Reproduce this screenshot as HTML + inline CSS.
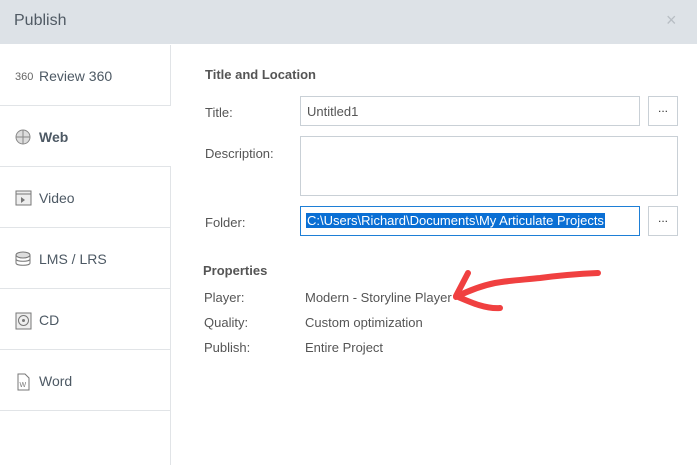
<!DOCTYPE html>
<html><head><style>
body{margin:0;width:697px;height:465px;background:#fff;font-family:"Liberation Sans",sans-serif;color:#4a4f55;position:relative;overflow:hidden;font-size:13px}
.hdr{position:absolute;left:0;top:0;width:697px;height:44px;background:#dde2e7}
.hdr .t{position:absolute;left:14px;top:12px;font-size:16px;color:#505a64}
.hdr .x{position:absolute;left:666px;top:10px;font-size:18px;color:#b8bec4}
.side{position:absolute;left:0;top:45px;width:170px;height:420px;border-right:1px solid #e1e4e7}
.it{position:absolute;left:0;width:170px;height:60px;border-bottom:1px solid #e1e4e7}
.it span{position:absolute;left:39px;top:23px;font-size:14px;color:#4d5964}
.it svg{position:absolute;left:15px;top:23px}
.sel{width:171px;background:#fff}
.a{position:absolute;font-size:13px;color:#555}
.box{position:absolute;border:1px solid #c9d0d6;background:#fff;box-sizing:border-box}
.btn{position:absolute;border:1px solid #c9d0d6;width:30px;height:30px;box-sizing:border-box;text-align:center;font-size:12px;line-height:22px;color:#333}
</style></head><body>
<div class="hdr"><div class="t">Publish</div><div class="x">×</div></div>
<div class="side">
 <div class="it" style="top:0"><svg width="20" height="16"><text x="0" y="12" font-size="11" fill="#666" font-family="Liberation Sans">360</text></svg><span>Review 360</span></div>
 <div class="it sel" style="top:61px"><svg width="18" height="18"><circle cx="8" cy="8" r="7" fill="#ddd" stroke="#888"/><path d="M1,8H15M8,1V15" stroke="#888" fill="none"/></svg><span style="font-weight:bold">Web</span></div>
 <div class="it" style="top:122px"><svg width="18" height="18"><rect x="1" y="1" width="15" height="14" fill="#eee" stroke="#777"/><path d="M1,4H16" stroke="#777"/><path d="M6,7V13L10,10Z" fill="#777"/></svg><span>Video</span></div>
 <div class="it" style="top:183px"><svg width="18" height="18"><ellipse cx="8" cy="4" rx="7" ry="3" fill="#ddd" stroke="#777"/><path d="M1,4V12C1,15 15,15 15,12V4M1,8C1,11 15,11 15,8" stroke="#777" fill="none"/></svg><span>LMS / LRS</span></div>
 <div class="it" style="top:244px"><svg width="18" height="18"><rect x="1" y="1" width="15" height="16" fill="#eee" stroke="#777"/><circle cx="8.5" cy="8.5" r="5" fill="none" stroke="#777"/><circle cx="8.5" cy="8.5" r="1.5" fill="#777"/></svg><span>CD</span></div>
 <div class="it" style="top:305px"><svg width="18" height="18"><path d="M3,1H10L14,5V17H3Z" fill="#fff" stroke="#777"/><text x="4.5" y="14" font-size="7" fill="#777">W</text></svg><span>Word</span></div>
</div>
<div class="a" style="left:205px;top:67px;font-weight:bold;font-size:13px;color:#555">Title and Location</div>
<div class="a" style="left:205px;top:105px">Title:</div>
<div class="box" style="left:300px;top:96px;width:340px;height:30px"><span style="position:absolute;left:6px;top:7px;color:#555">Untitled1</span></div>
<div class="btn" style="left:648px;top:96px">...</div>
<div class="a" style="left:205px;top:146px">Description:</div>
<div class="box" style="left:300px;top:136px;width:378px;height:60px"></div>
<div class="a" style="left:205px;top:215px">Folder:</div>
<div class="box" style="left:300px;top:206px;width:340px;height:30px;border-color:#1e7fd6"><span style="position:absolute;left:5px;top:6px;background:#0a6fd4;color:#fff;padding:0 1px">C:\Users\Richard\Documents\My Articulate Projects</span></div>
<div class="btn" style="left:648px;top:206px">...</div>
<div class="a" style="left:203px;top:263px;font-weight:bold">Properties</div>
<div class="a" style="left:204px;top:290px">Player:</div>
<div class="a" style="left:305px;top:290px">Modern - Storyline Player</div>
<div class="a" style="left:204px;top:315px">Quality:</div>
<div class="a" style="left:305px;top:315px">Custom optimization</div>
<div class="a" style="left:204px;top:340px">Publish:</div>
<div class="a" style="left:305px;top:340px">Entire Project</div>
<svg style="position:absolute;left:0;top:0" width="697" height="465"><path d="M598,273C575,274 555,276 540,278C520,280 505,281 495,283C480,286 468,291 456,297M468,273L456,296C470,302 485,309 500,308" stroke="#f04040" stroke-width="6" fill="none" stroke-linecap="round" stroke-linejoin="round"/></svg>
</body></html>
